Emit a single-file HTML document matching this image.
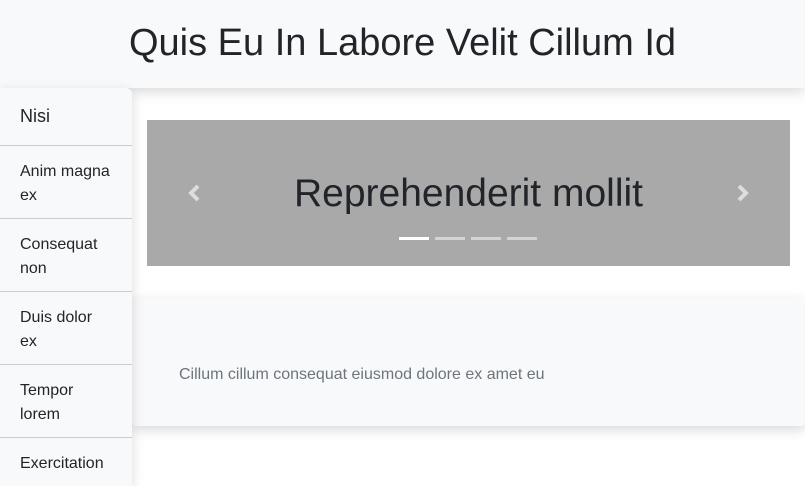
<!DOCTYPE html>
<html><head><style>
*{margin:0;padding:0;box-sizing:border-box}
html,body{width:805px;height:486px;overflow:hidden}
body{background:#fff;font-family:"Liberation Sans",Arial,sans-serif;color:#212529;position:relative}
.hdr{position:absolute;left:0;top:0;width:805px;height:88px;background:#f8f9fa;box-shadow:0 4px 12px rgba(0,0,0,.15);z-index:2;text-align:center;font-size:38px;line-height:86px;font-weight:500}
.side{position:absolute;left:0;top:88px;width:132px;height:398px;overflow:hidden;background:#f8f9fa;border-top-right-radius:6px;box-shadow:0 4px 12px rgba(0,0,0,.15);z-index:3}
.side div{padding:14px 4px 0 20px;border-bottom:1px solid #ccc;font-size:16px;line-height:24px;height:73px;white-space:nowrap}
.side div.f{height:58px;font-size:18px;padding-top:16px}
.car{position:absolute;left:147px;top:120px;width:643px;height:146px;background:#a9a9a9}
.car h2{position:absolute;left:0;right:0;top:51px;text-align:center;font-size:39px;font-weight:500;line-height:46px}
.ind{position:absolute;top:117px;height:3px;width:30px;background:rgba(255,255,255,.5)}
.card{position:absolute;left:132px;top:298px;width:673px;height:128px;background:#f8f9fa;box-shadow:0 4px 12px rgba(0,0,0,.15);border-radius:4px}
.card p{position:absolute;left:47px;top:68px;color:#6c757d;font-size:16px}
</style></head><body>
<div class="hdr">Quis Eu In Labore Velit Cillum Id</div>
<div class="side">
<div class="f">Nisi</div>
<div>Anim magna<br>ex</div>
<div>Consequat<br>non</div>
<div>Duis dolor<br>ex</div>
<div>Tempor<br>lorem</div>
<div style="border:none;height:49px">Exercitation</div>
</div>
<div class="car">
<svg style="position:absolute;left:41px;top:64px" width="14" height="18" viewBox="0 0 14 18"><path d="M10 2 L3 9 L10 16" stroke="#ddd" stroke-width="4" fill="none"/></svg>
<svg style="position:absolute;left:588px;top:64px" width="14" height="18" viewBox="0 0 14 18"><path d="M4 2 L11 9 L4 16" stroke="#ddd" stroke-width="4" fill="none"/></svg>
<h2>Reprehenderit mollit</h2>
<div class="ind" style="left:252px;background:#fff"></div>
<div class="ind" style="left:288px"></div>
<div class="ind" style="left:324px"></div>
<div class="ind" style="left:360px"></div>
</div>
<div class="card"><p>Cillum cillum consequat eiusmod dolore ex amet eu</p></div>
</body></html>
